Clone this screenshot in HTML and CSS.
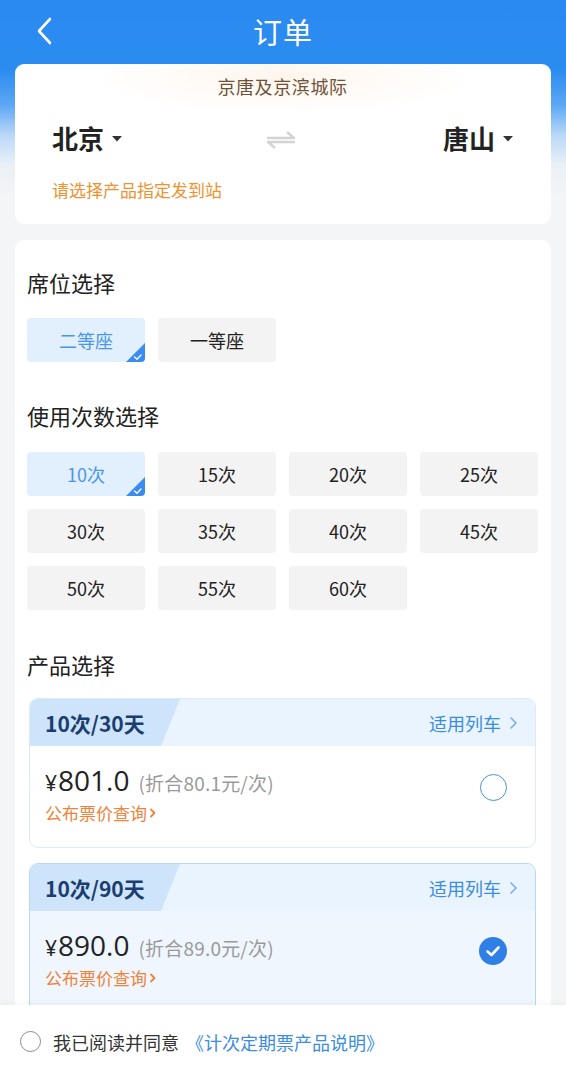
FILE: index.html
```html
<!DOCTYPE html>
<html lang="zh-CN">
<head>
<meta charset="utf-8">
<title>订单</title>
<link rel="stylesheet" href="styles.css">
</head>
<body>
<div class="page">
  <header class="nav">
    <div class="nav-left">
      <svg class="back" width="18" height="28" viewBox="0 0 18 28"><polyline points="14,2 3,14 14,26" fill="none" stroke="#fff" stroke-width="2.6" stroke-linecap="round" stroke-linejoin="round"/></svg>
    </div>
    <h1 class="nav-title">订单</h1>
    <div class="nav-right"></div>
  </header>

  <section class="card route">
    <div class="route-name">京唐及京滨城际</div>
    <div class="cities">
      <div class="city">北京<svg class="caret" width="10" height="6" viewBox="0 0 10 6"><path d="M0 0H10L5 5.5Z" fill="#333"/></svg></div>
      <svg class="swap" width="32" height="20" viewBox="0 0 32 20"><path d="M2 8H29L22 2" fill="none" stroke="#d3d3d3" stroke-width="2.4" stroke-linejoin="round"/><path d="M30 12H3L10 18" fill="none" stroke="#d3d3d3" stroke-width="2.4" stroke-linejoin="round"/></svg>
      <div class="city">唐山<svg class="caret" width="10" height="6" viewBox="0 0 10 6"><path d="M0 0H10L5 5.5Z" fill="#333"/></svg></div>
    </div>
    <div class="route-hint">请选择产品指定发到站</div>
  </section>

  <section class="card main">
    <h2 class="sec-title">席位选择</h2>
    <div class="opt-grid seats">
      <div class="opt selected">二等座<svg class="tick" width="19" height="19" viewBox="0 0 19 19"><path d="M19 0V19H0Z" fill="#3b8cf0"/><path d="M8.5 14L11 16.2L15 12" fill="none" stroke="#fff" stroke-width="1.3" stroke-linecap="round" stroke-linejoin="round"/></svg></div>
      <div class="opt">一等座</div>
    </div>

    <h2 class="sec-title gap">使用次数选择</h2>
    <div class="opt-grid counts">
      <div class="opt selected">10次<svg class="tick" width="19" height="19" viewBox="0 0 19 19"><path d="M19 0V19H0Z" fill="#3b8cf0"/><path d="M8.5 14L11 16.2L15 12" fill="none" stroke="#fff" stroke-width="1.3" stroke-linecap="round" stroke-linejoin="round"/></svg></div>
      <div class="opt">15次</div>
      <div class="opt">20次</div>
      <div class="opt">25次</div>
      <div class="opt">30次</div>
      <div class="opt">35次</div>
      <div class="opt">40次</div>
      <div class="opt">45次</div>
      <div class="opt">50次</div>
      <div class="opt">55次</div>
      <div class="opt">60次</div>
    </div>

    <h2 class="sec-title gap2">产品选择</h2>
    <div class="products">
      <div class="product">
        <div class="p-head">
          <span class="p-tag">10次/30天</span>
          <span class="p-trains">适用列车<svg width="9" height="14" viewBox="0 0 9 14"><polyline points="2,2 7,7 2,12" fill="none" stroke="#6aa8ea" stroke-width="1.4" stroke-linecap="round" stroke-linejoin="round"/></svg></span>
        </div>
        <div class="p-body">
          <div class="p-info">
            <div class="p-price"><span class="yen">¥</span>801.0<span class="p-unit">(折合80.1元/次)</span></div>
            <div class="p-link">公布票价查询<svg width="8" height="12" viewBox="0 0 8 12"><polyline points="2,2.5 5.5,6 2,9.5" fill="none" stroke="#f0823a" stroke-width="1.8" stroke-linecap="round" stroke-linejoin="round"/></svg></div>
          </div>
          <span class="radio"></span>
        </div>
      </div>

      <div class="product active">
        <div class="p-head">
          <span class="p-tag">10次/90天</span>
          <span class="p-trains">适用列车<svg width="9" height="14" viewBox="0 0 9 14"><polyline points="2,2 7,7 2,12" fill="none" stroke="#6aa8ea" stroke-width="1.4" stroke-linecap="round" stroke-linejoin="round"/></svg></span>
        </div>
        <div class="p-body">
          <div class="p-info">
            <div class="p-price"><span class="yen">¥</span>890.0<span class="p-unit">(折合89.0元/次)</span></div>
            <div class="p-link">公布票价查询<svg width="8" height="12" viewBox="0 0 8 12"><polyline points="2,2.5 5.5,6 2,9.5" fill="none" stroke="#f0823a" stroke-width="1.8" stroke-linecap="round" stroke-linejoin="round"/></svg></div>
          </div>
          <svg class="radio-on" width="28" height="28" viewBox="0 0 28 28"><circle cx="14" cy="14" r="14" fill="#2f80e6"/><polyline points="8.5,14.5 12.5,18 19.5,10.5" fill="none" stroke="#fff" stroke-width="2.6" stroke-linecap="round" stroke-linejoin="round"/></svg>
        </div>
      </div>
    </div>
  </section>

  <footer class="agree">
    <span class="agree-radio"></span>
    <span class="agree-text">我已阅读并同意</span>
    <span class="agree-link">《计次定期票产品说明》</span>
  </footer>
</div>
</body>
</html>
```

FILE: styles.css
```css
* { box-sizing: border-box; }

html, body {
  margin: 0;
  padding: 0;
}

body {
  width: 566px;
  height: 1080px;
  overflow: hidden;
  font-family: "Noto Sans CJK SC", "Noto Sans", sans-serif;
  color: #222;
  background: linear-gradient(180deg, #2a8af0 0px, #2b8cf0 70px, #5ca7f4 105px, #b9d8f8 135px, #eaf0f6 165px, #f4f5f7 200px, #f4f5f7 100%);
}

.page {
  height: 1080px;
  position: relative;
  overflow: hidden;
}

/* nav */
.nav {
  height: 62px;
  display: grid;
  grid-template-columns: 1fr auto 1fr;
  align-items: center;
}

.nav-left {
  padding-left: 36px;
  display: flex;
  align-items: center;
}

.nav-title {
  margin: 0;
  font-size: 29px;
  font-weight: 400;
  color: #fff;
  line-height: 40px;
  letter-spacing: 1px;
}

/* cards */
.card {
  background: #fff;
  border-radius: 9px;
  margin: 0 15px;
}

.route {
  margin-top: 2px;
  padding: 10px 38px 22px 37px;
  background:
    radial-gradient(ellipse 190px 36px at 50% 14px, rgba(252, 226, 200, 0.32), rgba(255, 255, 255, 0) 100%),
    #fff;
}

.route-name {
  text-align: center;
  font-size: 18px;
  letter-spacing: 0.6px;
  line-height: 24px;
  color: #6e5238;
}

.cities {
  margin-top: 23px;
  display: flex;
  align-items: center;
  justify-content: space-between;
  height: 34px;
}

.city {
  font-size: 26px;
  font-weight: 700;
  color: #222;
  display: flex;
  align-items: center;
  gap: 8px;
  line-height: 34px;
}

.caret {
  margin-top: 2px;
}

.swap {
  margin-left: -4px;
  margin-top: 4px;
}

.route-hint {
  margin-top: 23px;
  font-size: 17px;
  line-height: 24px;
  color: #f0922e;
}

.main {
  margin-top: 16px;
  padding: 28px 14px 40px 12px;
  min-height: 900px;
}

.sec-title {
  margin: 0;
  font-size: 22px;
  font-weight: 400;
  line-height: 28px;
  color: #222;
}

.sec-title.gap {
  margin-top: 39px;
}

.sec-title.gap2 {
  margin-top: 40px;
}

.opt-grid {
  margin-top: 21px;
  display: grid;
  grid-template-columns: repeat(4, 118px);
  column-gap: 13px;
  row-gap: 13px;
}

.seats {
  margin-top: 22px;
}

.counts {
  margin-top: 23px;
}

.opt {
  position: relative;
  overflow: hidden;
  height: 44px;
  border-radius: 4px;
  background: #f3f3f3;
  display: flex;
  align-items: center;
  justify-content: center;
  font-size: 18px;
  color: #222;
}

.opt.selected {
  background: #e2effd;
  color: #4a97e8;
}

.tick {
  position: absolute;
  right: 0;
  bottom: 0;
}

/* products */
.products {
  margin: 20px 1px 0 2px;
  display: flex;
  flex-direction: column;
  gap: 15px;
}

.product {
  border: 1px solid #dfeaf6;
  border-radius: 9px;
  overflow: hidden;
  background: #fff;
}

.product.active {
  border-color: #b8d6f2;
  background: #eff6fe;
}

.p-head {
  height: 47px;
  background: #eaf4fe;
  display: flex;
  align-items: center;
  justify-content: space-between;
  padding-right: 17px;
}

.p-tag {
  height: 47px;
  width: 150px;
  padding-left: 15px;
  display: flex;
  align-items: center;
  background: #cde4fb;
  clip-path: polygon(0 0, 100% 0, calc(100% - 19px) 100%, 0 100%);
  font-size: 21px;
  font-weight: 700;
  color: #1c3d70;
}

.p-trains {
  font-size: 18px;
  color: #3b8de0;
  display: flex;
  align-items: center;
  gap: 8px;
}

.p-body {
  display: flex;
  align-items: flex-start;
  justify-content: space-between;
  padding: 18px 28px 0 15px;
  height: 101px;
}

.p-price {
  height: 32px;
  font-size: 28px;
  line-height: 32px;
  font-weight: 500;
  color: #222;
  font-family: "Open Sans", "Noto Sans CJK SC", sans-serif;
  display: flex;
  align-items: baseline;
  white-space: nowrap;
}

.yen {
  font-size: 21px;
  margin-right: 1px;
}

.p-unit {
  font-family: "Noto Sans CJK SC", sans-serif;
  font-weight: 400;
  font-size: 19px;
  letter-spacing: 0.2px;
  color: #9a9a9a;
  margin-left: 9px;
}

.p-link {
  height: 24px;
  margin-top: 5px;
  font-size: 17px;
  line-height: 24px;
  color: #f0823a;
  display: flex;
  align-items: center;
  gap: 2px;
}

.radio {
  width: 27px;
  height: 27px;
  border-radius: 50%;
  border: 1.6px solid #4a90e2;
  margin-top: 10px;
}

.radio-on {
  margin-top: 8px;
}

/* footer */
.agree {
  position: absolute;
  left: 0;
  right: 0;
  bottom: 0;
  height: 75px;
  background: #fff;
  box-shadow: 0 -2px 6px rgba(0, 0, 0, 0.04);
  display: flex;
  align-items: center;
  padding-left: 20px;
  padding-bottom: 2px;
}

.agree-radio {
  width: 21px;
  height: 21px;
  border-radius: 50%;
  border: 1.6px solid #8a8a8a;
  margin-right: 12px;
}

.agree-text {
  font-size: 18px;
  color: #333;
}

.agree-link {
  font-size: 18px;
  color: #3b8de0;
  margin-left: 7px;
}
```
